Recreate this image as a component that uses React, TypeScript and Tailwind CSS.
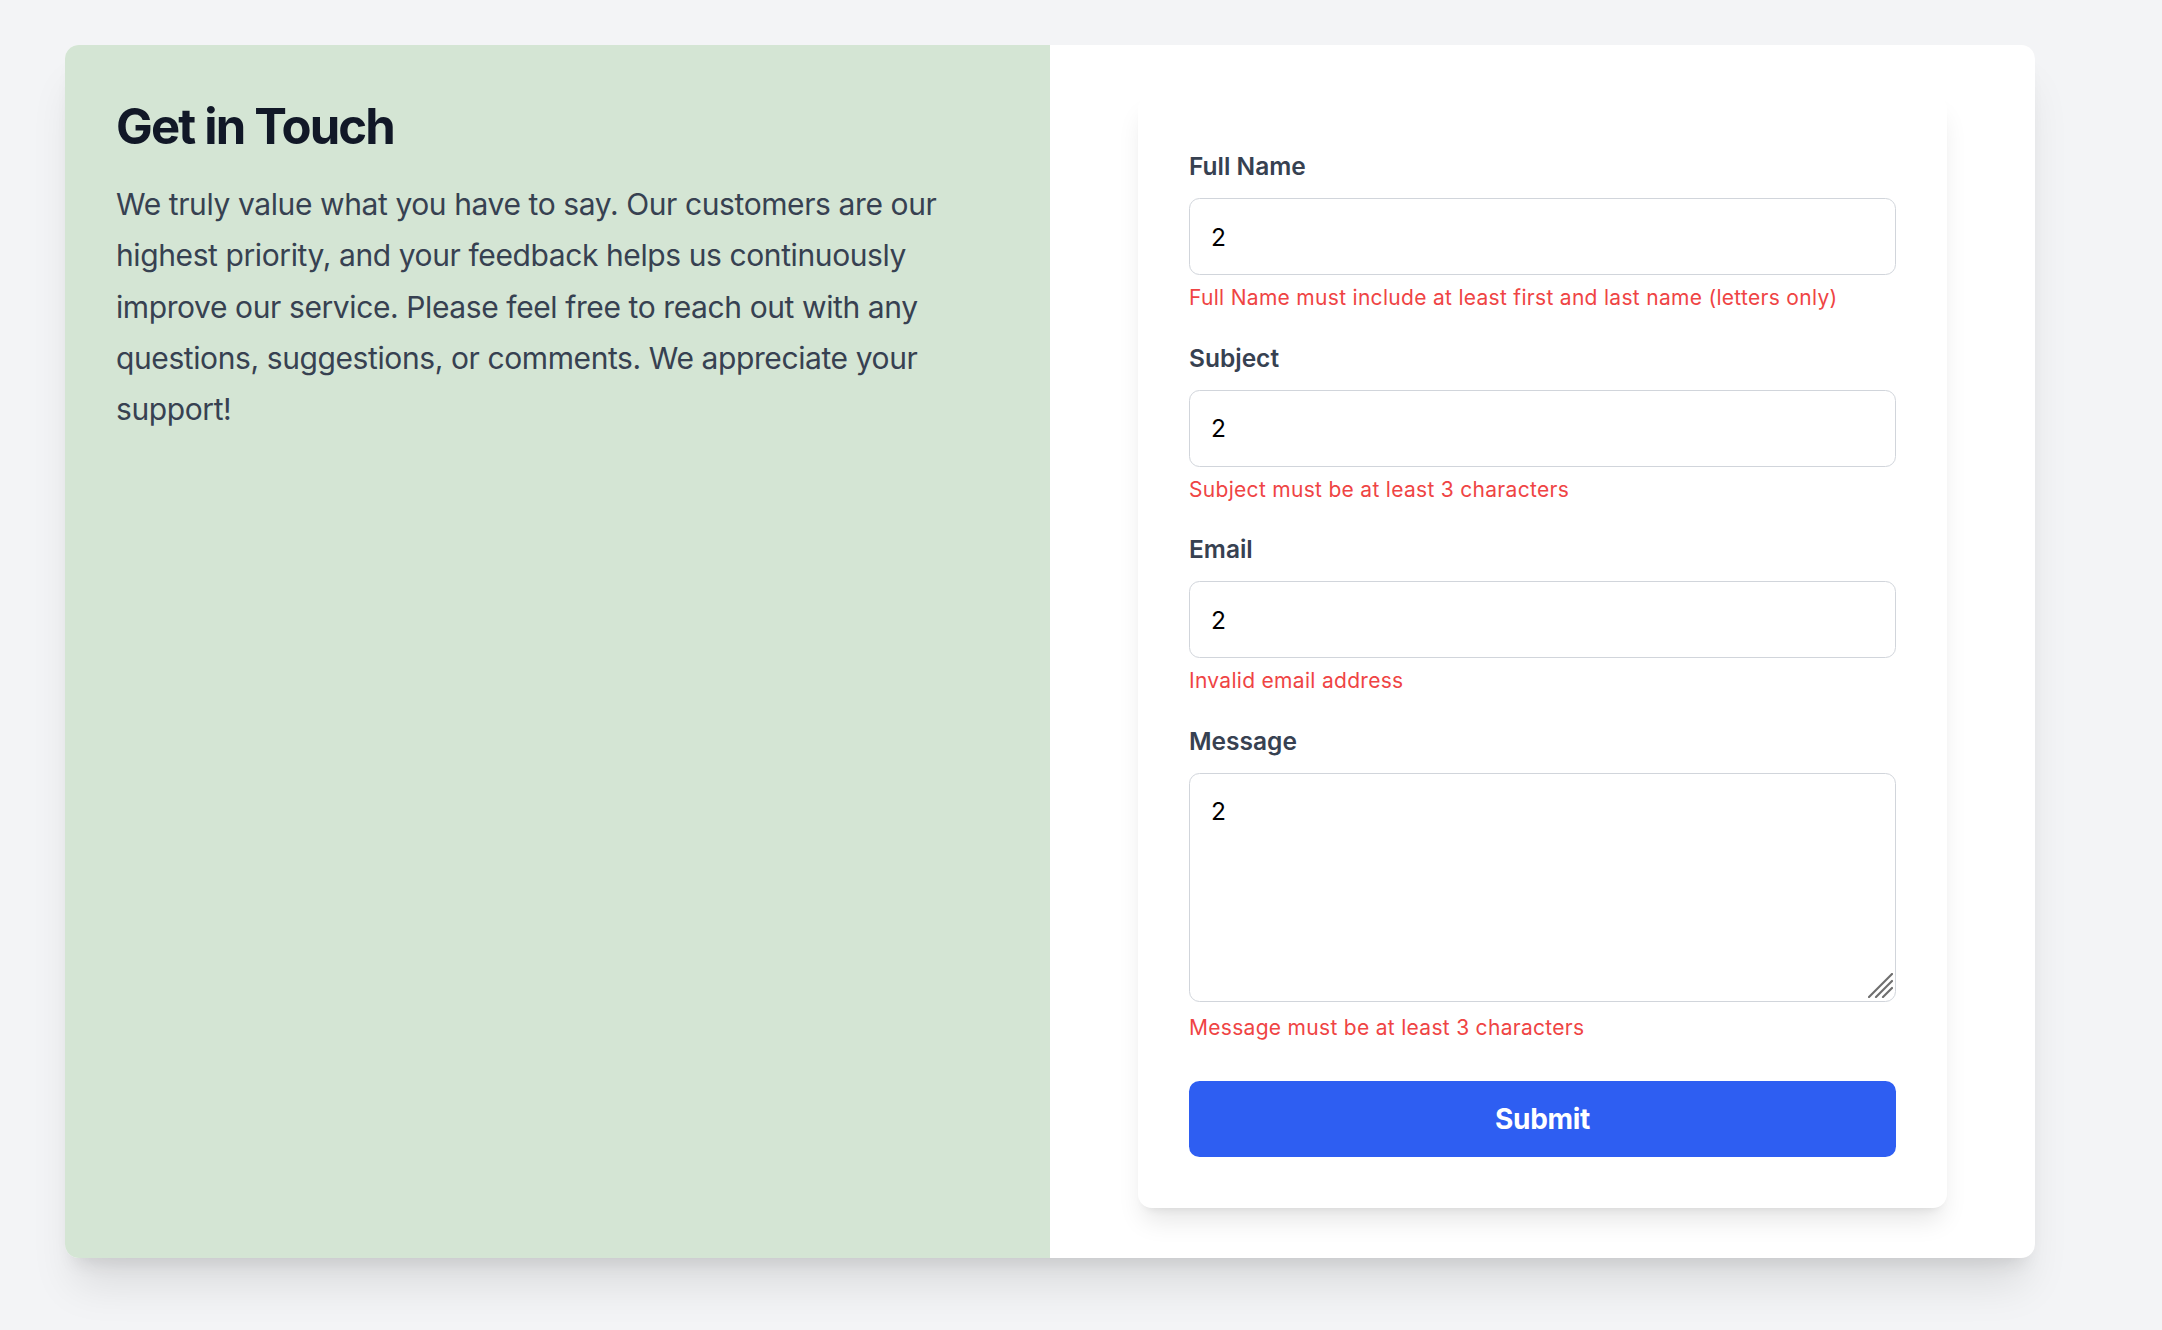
import React from "react";

const fields = [
  {
    label: "Full Name",
    error: "Full Name must include at least first and last name (letters only)",
  },
  { label: "Subject", error: "Subject must be at least 3 characters" },
  { label: "Email", error: "Invalid email address" },
];

function ContactSection() {
  return (
    <div className="min-h-screen bg-[#f3f4f6] pt-[45px] pl-[65px] pb-[72px] font-['Inter',sans-serif]">
      <div className="w-[1970px] grid grid-cols-2 rounded-[14px] overflow-hidden bg-white shadow-[0_35px_44px_-9px_rgba(0,0,0,0.1),0_14px_18px_-10px_rgba(0,0,0,0.1)]">
        <div className="bg-[#d4e5d4] px-[51px] pt-[50px]">
          <h1 className="text-[49px] leading-[63px] font-bold text-[#111827] tracking-[-1.8px]">
            Get in Touch
          </h1>
          <p className="mt-[21px] text-[30px] leading-[51.3px] text-[#374151] tracking-[-0.4px]">
            We truly value what you have to say. Our customers are our highest
            priority, and your feedback helps us continuously improve our
            service. Please feel free to reach out with any questions,
            suggestions, or comments. We appreciate your support!
          </p>
        </div>
        <div className="px-[88px] py-[50px]">
          <form className="flex flex-col bg-white rounded-[14px] px-[51px] pt-[54px] pb-[51px] shadow-[0_17px_26px_-5px_rgba(0,0,0,0.1),0_7px_10px_-7px_rgba(0,0,0,0.1)]">
            {fields.map((f) => (
              <div key={f.label} className="mb-[28.5px]">
                <label className="block mb-[14px] text-[24.5px] leading-[35px] font-semibold text-[#374151]">
                  {f.label}
                </label>
                <input
                  defaultValue="2"
                  className="block w-full h-[77px] px-[21px] border border-[#d1d5db] rounded-[10.5px] text-[24.5px] text-black outline-none"
                />
                <p className="mt-[9px] text-[21px] leading-[28px] text-[#ef4444] tracking-[0.3px]">
                  {f.error}
                </p>
              </div>
            ))}
            <div>
              <label className="block mb-[14px] text-[24.5px] leading-[35px] font-semibold text-[#374151]">
                Message
              </label>
              <div className="relative">
                <textarea
                  defaultValue="2"
                  className="block w-full h-[229px] px-[21px] py-[20px] border border-[#d1d5db] rounded-[10.5px] text-[24.5px] leading-[35px] text-black outline-none resize-none"
                />
                <svg
                  className="absolute right-[3px] bottom-[4px]"
                  width="25"
                  height="25"
                  viewBox="0 0 25 25"
                >
                  <g stroke="#6e6e6e" strokeWidth="2.2" strokeLinecap="round">
                    <line x1="1" y1="24" x2="24" y2="1" />
                    <line x1="8" y1="24" x2="24" y2="8" />
                    <line x1="15" y1="24" x2="24" y2="15" />
                  </g>
                </svg>
              </div>
              <p className="mt-[12px] text-[21px] leading-[28px] text-[#ef4444] tracking-[0.3px]">
                Message must be at least 3 characters
              </p>
            </div>
            <button
              type="button"
              className="mt-[39px] h-[76px] w-full rounded-[10.5px] bg-[#2e5ef2] text-white text-[28px] font-bold tracking-[-0.3px]"
            >
              Submit
            </button>
          </form>
        </div>
      </div>
    </div>
  );
}

export default function App() {
  return <ContactSection />;
}
